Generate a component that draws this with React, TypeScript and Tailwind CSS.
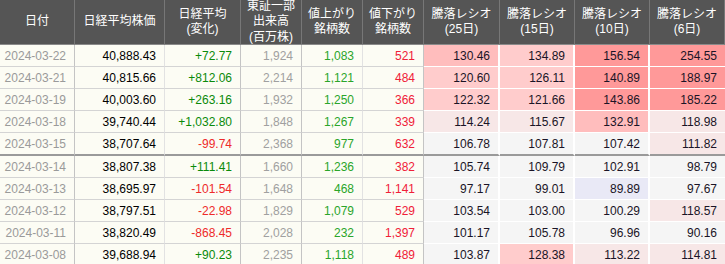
import React from "react";

type Row = {
  date: string;
  price: string;
  change: string;
  volume: string;
  up: string;
  down: string;
  ratios: [string, string][];
};

// 背景色の段階
const bg: Record<string, string> = {
  S: "bg-[#ff9999]",
  M: "bg-[#ffbdbd]",
  P: "bg-[#ffcccc]",
  L: "bg-[#f7e7e7]",
  G: "bg-[#f5f5f5]",
  B: "bg-[#e9e9f6]",
};

const rows: Row[] = [
  { date: "2024-03-22", price: "40,888.43", change: "+72.77", volume: "1,924", up: "1,083", down: "521", ratios: [["130.46", "M"], ["134.89", "P"], ["156.54", "S"], ["254.55", "S"]] },
  { date: "2024-03-21", price: "40,815.66", change: "+812.06", volume: "2,214", up: "1,121", down: "484", ratios: [["120.60", "P"], ["126.11", "P"], ["140.89", "S"], ["188.97", "S"]] },
  { date: "2024-03-19", price: "40,003.60", change: "+263.16", volume: "1,932", up: "1,250", down: "366", ratios: [["122.32", "P"], ["121.66", "P"], ["143.86", "S"], ["185.22", "S"]] },
  { date: "2024-03-18", price: "39,740.44", change: "+1,032.80", volume: "1,848", up: "1,267", down: "339", ratios: [["114.24", "L"], ["115.67", "L"], ["132.91", "M"], ["118.98", "L"]] },
  { date: "2024-03-15", price: "38,707.64", change: "-99.74", volume: "2,368", up: "977", down: "632", ratios: [["106.78", "G"], ["107.81", "G"], ["107.42", "G"], ["111.82", "L"]] },
  { date: "2024-03-14", price: "38,807.38", change: "+111.41", volume: "1,660", up: "1,236", down: "382", ratios: [["105.74", "G"], ["109.79", "G"], ["102.91", "G"], ["98.79", "G"]] },
  { date: "2024-03-13", price: "38,695.97", change: "-101.54", volume: "1,648", up: "468", down: "1,141", ratios: [["97.17", "G"], ["99.01", "G"], ["89.89", "B"], ["97.67", "G"]] },
  { date: "2024-03-12", price: "38,797.51", change: "-22.98", volume: "1,829", up: "1,079", down: "529", ratios: [["103.54", "G"], ["103.00", "G"], ["100.29", "G"], ["118.57", "L"]] },
  { date: "2024-03-11", price: "38,820.49", change: "-868.45", volume: "2,028", up: "232", down: "1,397", ratios: [["101.17", "G"], ["105.78", "G"], ["96.96", "G"], ["90.16", "G"]] },
  { date: "2024-03-08", price: "39,688.94", change: "+90.23", volume: "2,235", up: "1,118", down: "489", ratios: [["103.87", "G"], ["128.38", "P"], ["113.22", "L"], ["114.81", "L"]] },
];

const headers = [
  ["日付"],
  ["日経平均株価"],
  ["日経平均", "(変化)"],
  ["東証一部", "出来高", "(百万株)"],
  ["値上がり", "銘柄数"],
  ["値下がり", "銘柄数"],
  ["騰落レシオ", "(25日)"],
  ["騰落レシオ", "(15日)"],
  ["騰落レシオ", "(10日)"],
  ["騰落レシオ", "(6日)"],
];

const App: React.FC = () => {
  return (
    <div
      className="w-[725px] h-[264px] overflow-hidden bg-white text-[12px]"
      style={{ fontFamily: '"Liberation Sans", "Noto Sans CJK JP", sans-serif' }}
    >
      <div className="grid grid-cols-[75px_90px_76px_61px_61px_61px_76px_75px_75px_75px]">
        {headers.map((lines, i) => (
          <div
            key={i}
            className="h-[45px] bg-[#555555] border-b border-b-[#8a8a8a] border-r border-r-[#777777] last:border-r-0 flex flex-col items-center justify-center overflow-hidden text-white leading-[15.5px] text-[12px]"
          >
            {lines.map((l) => (
              <span key={l} className="whitespace-nowrap">{l}</span>
            ))}
          </div>
        ))}

        {rows.map((r, i) => {
          const week = i === 4;
          const rowB = week
            ? "h-[23px] border-b-2 border-b-[#9a9a9a]"
            : "h-[22px] border-b";
          const left = `${rowB} bg-[#fcfcf4] flex items-center justify-end pr-2`;
          const plus = r.change.startsWith("+");
          return (
            <React.Fragment key={r.date}>
              <div className={`${left} ${week ? "" : "border-b-[#d4d4d4]"} border-r border-r-[#c4c4c4] text-[#9a9a9a]`}>{r.date}</div>
              <div className={`${left} ${week ? "" : "border-b-[#d4d4d4]"} border-r border-r-[#e2e2e2] text-black`}>{r.price}</div>
              <div className={`${left} ${week ? "" : "border-b-[#d4d4d4]"} border-r border-r-[#c4c4c4] ${plus ? "text-[#0a8a0a]" : "text-[#ee2a2a]"}`}>{r.change}</div>
              <div className={`${left} ${week ? "" : "border-b-[#d4d4d4]"} border-r border-r-[#c4c4c4] text-[#a0a0a0]`}>{r.volume}</div>
              <div className={`${left} ${week ? "" : "border-b-[#d4d4d4]"} border-r border-r-[#e2e2e2] text-[#2aa52a]`}>{r.up}</div>
              <div className={`${left} ${week ? "" : "border-b-[#d4d4d4]"} border-r border-r-[#c4c4c4] text-[#f02038]`}>{r.down}</div>
              {r.ratios.map(([v, lv], j) => (
                <div
                  key={j}
                  className={`${rowB} ${week ? "" : "border-b-white"} ${j < 3 ? "border-r-2 border-r-white" : ""} ${bg[lv]} flex items-center justify-end pr-2 text-[#1a1426]`}
                >
                  {v}
                </div>
              ))}
            </React.Fragment>
          );
        })}
      </div>
    </div>
  );
};

export default App;
